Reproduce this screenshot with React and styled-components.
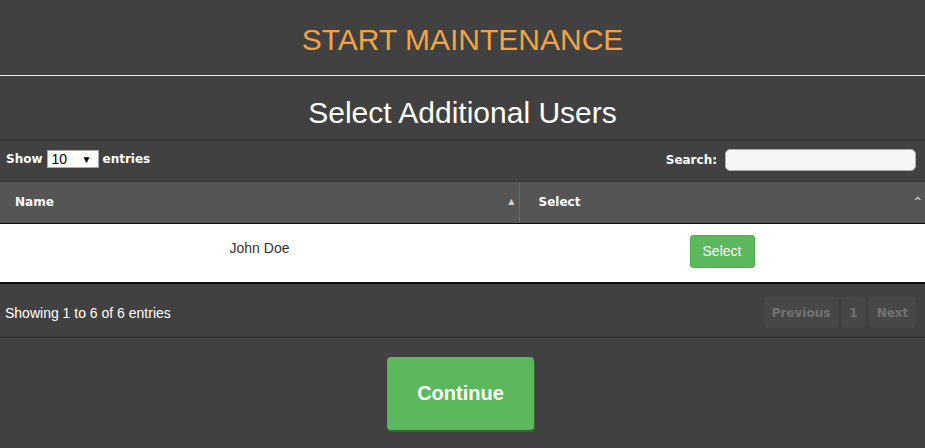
import React from "react";
import styled, { createGlobalStyle } from "styled-components";

const GlobalStyle = createGlobalStyle`
  html, body {
    margin: 0;
    padding: 0;
    background: #414141;
  }
  body {
    font-family: "Liberation Sans", Arial, sans-serif;
  }
`;

const Page = styled.main`
  width: 925px;
  min-height: 448px;
  background: #414141;
  color: #fff;
`;

const TitleBar = styled.header`
  height: 75px;
  display: flex;
  align-items: center;
  justify-content: center;
  border-bottom: 1px solid #f0f0f0;
  h1 {
    margin: 0;
    padding-top: 5px;
    font-weight: normal;
    font-size: 30px;
    color: #f2a444;
  }
`;

const SubTitle = styled.h2`
  margin: 0;
  height: 65px;
  display: flex;
  align-items: center;
  justify-content: center;
  font-weight: normal;
  font-size: 30px;
  color: #fff;
  border-bottom: 2px solid #363636;
  box-sizing: border-box;
  padding-top: 10px;
`;

const Controls = styled.div`
  height: 41px;
  display: flex;
  align-items: flex-start;
  justify-content: space-between;
  padding: 8px 9px 0 6px;
  box-sizing: border-box;
  border-bottom: 1px solid #333;
`;

const Label = styled.label`
  display: flex;
  align-items: center;
  gap: ${(p) => p.$gap || 4}px;
  font-family: "DejaVu Sans", Verdana, sans-serif;
  font-weight: bold;
  font-size: 12px;
  color: #fff;
  height: ${(p) => p.$h || 20}px;
`;

const LengthSelect = styled.span`
  width: 52px;
  height: 18px;
  box-sizing: border-box;
  background: #fff;
  border: 1px solid #a9a9a9;
  display: flex;
  align-items: center;
  justify-content: space-between;
  padding: 0 6px 0 4px;
  font-family: "Liberation Sans", Arial, sans-serif;
  font-weight: normal;
  font-size: 14px;
  color: #000;
  span {
    font-size: 10px;
  }
`;

const SearchInput = styled.input`
  width: 191px;
  height: 22px;
  box-sizing: border-box;
  border: 1px solid #b0b0b0;
  border-radius: 5px;
  background: #f5f5f5;
  outline: none;
`;

const Table = styled.table`
  width: 100%;
  border-collapse: collapse;
  table-layout: fixed;
`;

const HeadCell = styled.th`
  position: relative;
  height: 41px;
  background: #555555;
  border-bottom: 1px solid #111;
  border-left: ${(p) => (p.$divider ? "1px solid #6a6a6a" : "none")};
  text-align: left;
  padding: 0 0 0 ${(p) => p.$pad}px;
  font-family: "DejaVu Sans", Verdana, sans-serif;
  font-size: 12px;
  font-weight: bold;
  color: #fff;
  box-sizing: border-box;
`;

const SortIcon = styled.span`
  position: absolute;
  right: ${(p) => p.$right}px;
  top: 50%;
  transform: translateY(-50%);
  color: #d0d0d0;
  font-size: ${(p) => p.$size}px;
  line-height: 1;
`;

const BodyCell = styled.td`
  background: #fff;
  height: 60px;
  box-sizing: border-box;
  vertical-align: top;
  text-align: center;
  padding-top: ${(p) => p.$top}px;
  border-bottom: 2px solid #111;
  font-size: 14px;
  color: #333;
`;

const SmallButton = styled.button`
  width: 65px;
  height: 33px;
  border: 1px solid #4cae4c;
  border-radius: 3px;
  background: #5cb85c;
  color: #fff;
  font-family: "Liberation Sans", Arial, sans-serif;
  font-size: 14px;
  padding: 0;
`;

const Footer = styled.div`
  height: 54px;
  box-sizing: border-box;
  display: flex;
  align-items: flex-start;
  justify-content: space-between;
  padding: 13px 9px 0 5px;
  border-bottom: 2px solid #363636;
`;

const Info = styled.div`
  font-size: 14px;
  color: #fff;
  padding-top: 8px;
`;

const Pager = styled.div`
  display: flex;
  gap: 4px;
`;

const PageButton = styled.span`
  height: 31px;
  min-width: ${(p) => p.$w}px;
  box-sizing: border-box;
  display: flex;
  align-items: center;
  justify-content: center;
  background: #474747;
  border-radius: 3px;
  font-family: "DejaVu Sans", Verdana, sans-serif;
  font-weight: bold;
  font-size: 12px;
  color: #727272;
`;

const Actions = styled.div`
  display: flex;
  justify-content: center;
  padding: 19px 4px 0 0;
`;

const ContinueButton = styled.button`
  width: 147px;
  height: 73px;
  border: none;
  border-radius: 4px;
  background: #5cb85c;
  box-shadow: 1px 2px 0 #2b6b2b;
  color: #fff;
  font-family: "Liberation Sans", Arial, sans-serif;
  font-weight: bold;
  font-size: 20px;
  padding: 0;
`;

export default function App() {
  return (
    <Page>
      <GlobalStyle />
      <TitleBar>
        <h1>START MAINTENANCE</h1>
      </TitleBar>
      <SubTitle>Select Additional Users</SubTitle>
      <Controls>
        <Label>
          Show
          <LengthSelect>
            10<span>▼</span>
          </LengthSelect>
          entries
        </Label>
        <Label $gap={8} $h={22}>
          Search:
          <SearchInput type="search" />
        </Label>
      </Controls>
      <Table>
        <colgroup>
          <col style={{ width: "519px" }} />
          <col />
        </colgroup>
        <thead>
          <tr>
            <HeadCell $pad={15}>
              Name
              <SortIcon $right={4} $size={8}>▲</SortIcon>
            </HeadCell>
            <HeadCell $pad={19} $divider>
              Select
              <SortIcon $right={3} $size={10}>^</SortIcon>
            </HeadCell>
          </tr>
        </thead>
        <tbody>
          <tr>
            <BodyCell $top={16}>John Doe</BodyCell>
            <BodyCell $top={11}>
              <SmallButton>Select</SmallButton>
            </BodyCell>
          </tr>
        </tbody>
      </Table>
      <Footer>
        <Info>Showing 1 to 6 of 6 entries</Info>
        <Pager>
          <PageButton $w={74}>Previous</PageButton>
          <PageButton $w={23}>1</PageButton>
          <PageButton $w={47}>Next</PageButton>
        </Pager>
      </Footer>
      <Actions>
        <ContinueButton>Continue</ContinueButton>
      </Actions>
    </Page>
  );
}
